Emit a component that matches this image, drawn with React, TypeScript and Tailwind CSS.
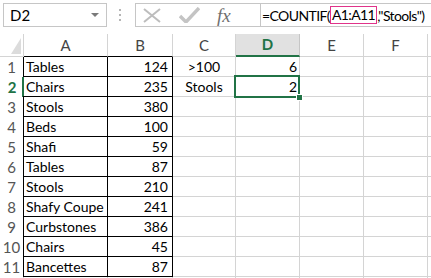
import React from 'react';

const rows: [string, string, string, string][] = [
  ['Tables', '124', '>100', '6'],
  ['Chairs', '235', 'Stools', '2'],
  ['Stools', '380', '', ''],
  ['Beds', '100', '', ''],
  ['Shafi', '59', '', ''],
  ['Tables', '87', '', ''],
  ['Stools', '210', '', ''],
  ['Shafy Coupe', '241', '', ''],
  ['Curbstones', '386', '', ''],
  ['Chairs', '45', '', ''],
  ['Bancettes', '87', '', ''],
];

const font = { fontFamily: 'Lato, "Open Sans", sans-serif' };

function Toolbar() {
  return (
    <div className="flex h-[34px] shrink-0 items-start bg-white pt-[3px]">
      {/* Name box */}
      <div className="ml-[3px] flex h-[24px] w-[104px] shrink-0 items-center justify-between border border-[#c6c6c6] pl-[6px] pr-[7px] text-[15px] text-black">
        <span>D2</span>
        <svg width="8" height="5" viewBox="0 0 8 5">
          <path d="M0 0 L8 0 L4 4 Z" fill="#7a7a7a" />
        </svg>
      </div>

      {/* dots */}
      <div className="ml-[11px] flex h-[24px] w-[4px] shrink-0 flex-col items-center justify-center gap-[3px]">
        <div className="h-[2px] w-[2px] bg-[#b5b5b5]" />
        <div className="h-[2px] w-[2px] bg-[#b5b5b5]" />
        <div className="h-[2px] w-[2px] bg-[#b5b5b5]" />
      </div>

      {/* formula bar */}
      <div className="ml-[13px] flex h-[24px] min-w-0 flex-1 border border-r-0 border-[#c6c6c6]">
        <div className="flex w-[125px] shrink-0 items-center border-r border-[#c6c6c6]">
          <svg className="ml-[7px] shrink-0" width="18" height="15" viewBox="0 0 18 15">
            <path d="M1 1 L17 14 M17 1 L1 14" stroke="#bdbdbd" strokeWidth="2" fill="none" />
          </svg>
          <svg className="ml-[18px] shrink-0" width="21" height="16" viewBox="0 0 21 16">
            <path d="M1 9 L7 15 L20 1" stroke="#c4c4c4" strokeWidth="3.4" fill="none" />
          </svg>
          <span
            className="ml-[17px] text-[19px] italic leading-none text-[#707070]"
            style={{ fontFamily: '"Liberation Serif", serif' }}
          >
            fx
          </span>
        </div>
        <div className="flex shrink-0 items-center whitespace-nowrap pl-[1px] text-[14px] tracking-[-0.6px] text-black">
          =COUNTIF(
          <span className="border border-[#e0338a] px-[1px] leading-[16px]">A1:A11</span>
          ,"Stools")
        </div>
      </div>
    </div>
  );
}

function HeaderRow() {
  const cell = 'flex h-full shrink-0 items-center justify-center border-r text-[15px]';
  return (
    <div className="flex h-[23px] shrink-0">
      <div className="relative h-full w-[24px] shrink-0 border-r border-b border-[#d4d4d4]">
        <svg className="absolute right-[2px] bottom-[2px]" width="10" height="16" viewBox="0 0 10 16">
          <path d="M10 0 L10 16 L0 16 Z" fill="#dcdcdc" />
        </svg>
      </div>
      <div className={`${cell} w-[84px] border-[#d4d4d4] border-b border-b-black text-[#444]`}>A</div>
      <div className={`${cell} w-[65px] border-[#d4d4d4] border-b border-b-black text-[#444]`}>B</div>
      <div className={`${cell} w-[63px] border-[#d4d4d4] border-b text-[#444]`}>C</div>
      <div className={`${cell} w-[64px] border-[#c6c6c6] border-b-2 border-b-[#217346] bg-[#e1e1e1] font-bold text-[#217346]`}>D</div>
      <div className={`${cell} w-[64px] border-[#d4d4d4] border-b text-[#444]`}>E</div>
      <div className={`${cell} w-[64px] border-[#d4d4d4] border-b text-[#444]`}>F</div>
      <div className={`${cell} w-[64px] border-[#d4d4d4] border-b`} />
    </div>
  );
}

function DataRow({ n, r }: { n: number; r?: [string, string, string, string] }) {
  const sel = n === 2;
  const boxed = !!r;
  const ab = boxed ? 'border-black' : 'border-[#d4d4d4]';
  const grid = 'border-[#d4d4d4]';
  return (
    <div className="flex h-[20px] shrink-0 whitespace-nowrap text-[14px] leading-[19px]">
      <div
        className={`flex h-full w-[24px] shrink-0 items-center justify-center text-[15px] ${
          sel ? 'border-r-2 border-[#217346] pl-[2px] font-bold text-[#217346]' : `border-r ${boxed ? 'border-black' : 'border-[#d4d4d4]'} text-[#555]`
        }`}
      >
        {r ? n : ''}
      </div>
      <div className={`flex h-full shrink-0 items-center overflow-hidden border-r border-b ${ab} text-black ${sel ? '-ml-[1px] w-[85px] pl-[3px]' : 'w-[84px] pl-[2px]'}`}>
        {r?.[0]}
      </div>
      <div className={`flex h-full w-[65px] shrink-0 items-center justify-end border-r border-b ${ab} pr-[4px] text-black`}>
        {r?.[1]}
      </div>
      <div className={`flex h-full w-[63px] shrink-0 items-center justify-center border-r border-b ${grid} text-black`}>
        {r?.[2]}
      </div>
      <div className={`relative flex h-full w-[64px] shrink-0 items-center justify-end border-r border-b ${grid} pr-[2px] text-black`}>
        {r?.[3]}
        {sel && (
          <div className="absolute -left-[2px] -top-[2px] z-10 h-[23px] w-[66px] border-2 border-[#217346]">
            <div className="absolute -right-[5px] -bottom-[5px] h-[7px] w-[7px] border border-white bg-[#217346]" />
          </div>
        )}
      </div>
      <div className={`h-full w-[64px] shrink-0 border-r border-b ${grid}`} />
      <div className={`h-full w-[64px] shrink-0 border-r border-b ${grid}`} />
      <div className={`h-full w-[64px] shrink-0 border-r border-b ${grid}`} />
    </div>
  );
}

export default function App() {
  return (
    <div className="h-[278px] w-[431px] overflow-hidden bg-white" style={font}>
      <Toolbar />
      <div className="flex flex-col">
        <HeaderRow />
        {rows.map((r, i) => (
          <DataRow key={i} n={i + 1} r={r} />
        ))}
        <DataRow n={12} />
      </div>
    </div>
  );
}
